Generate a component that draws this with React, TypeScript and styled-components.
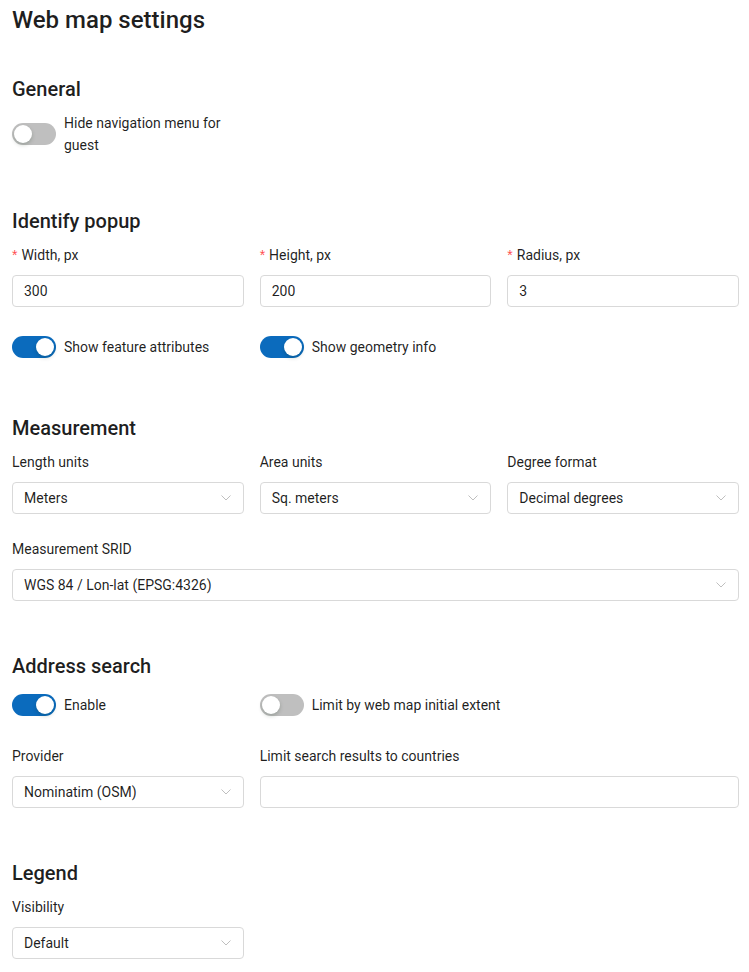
import React from "react";
import styled, { createGlobalStyle } from "styled-components";

const GlobalStyle = createGlobalStyle`
  html, body { margin: 0; padding: 0; background: #ffffff; }
  body {
    font-family: Roboto, "Noto Sans", "Liberation Sans", sans-serif;
    font-size: 14px;
    color: rgba(0, 0, 0, 0.88);
  }
  * { box-sizing: border-box; }
`;

const Page = styled.div`
  display: flex;
  flex-direction: column;
  padding: 4px 10px 16px 12px;
`;

const Title = styled.h1`
  margin: 0 0 12px 0;
  font-size: 24px;
  line-height: 32px;
  font-weight: 500;
  color: rgba(0, 0, 0, 0.88);
`;

const SectionTitle = styled.h2`
  margin: 27px 0 9px 0;
  font-size: 20px;
  line-height: 28px;
  font-weight: 500;
  color: rgba(0, 0, 0, 0.88);
`;

const Row = styled.div`
  display: grid;
  grid-template-columns: repeat(3, 1fr);
  column-gap: 16px;
  margin-bottom: 24px;
  &:last-child { margin-bottom: 0; }
`;

const Field = styled.div<{ $span?: number }>`
  display: flex;
  flex-direction: column;
  min-width: 0;
  grid-column: span ${(p) => p.$span ?? 1};
`;

const Label = styled.label`
  display: flex;
  align-items: center;
  height: 22px;
  line-height: 22px;
  margin-bottom: 9px;
  font-size: 14px;
  color: rgba(0, 0, 0, 0.88);
`;

const Required = styled.span`
  color: #ff4d4f;
  font-family: SimSun, "Liberation Sans", sans-serif;
  font-size: 14px;
  line-height: 1;
  margin-right: 4px;
`;

const Input = styled.div`
  height: 32px;
  border: 1px solid #d9d9d9;
  border-radius: 4px;
  padding: 0 11px;
  display: flex;
  align-items: center;
  font-size: 14px;
  line-height: 22px;
  color: rgba(0, 0, 0, 0.88);
  background: #fff;
`;

const SelectBox = styled(Input)`
  justify-content: space-between;
`;

const SwitchItem = styled.div<{ $span?: number }>`
  display: flex;
  align-items: center;
  min-height: 32px;
  gap: 8px;
  grid-column: span ${(p) => p.$span ?? 1};
`;

const SwitchTrack = styled.span<{ $on: boolean }>`
  position: relative;
  flex: none;
  width: 44px;
  height: 22px;
  border-radius: 11px;
  background: ${(p) => (p.$on ? "#0b6bbd" : "#bfbfbf")};
`;

const SwitchHandle = styled.span<{ $on: boolean }>`
  position: absolute;
  top: 2px;
  left: ${(p) => (p.$on ? "24px" : "2px")};
  width: 18px;
  height: 18px;
  border-radius: 50%;
  background: #fff;
  box-shadow: 0 2px 4px 0 rgba(0, 35, 11, 0.2);
`;

const SwitchLabel = styled.span`
  font-size: 14px;
  line-height: 22px;
  color: rgba(0, 0, 0, 0.88);
`;

const Chevron = () => (
  <svg width="10" height="6" viewBox="0 0 10 6" fill="none" style={{ flex: "none", marginRight: 1 }}>
    <path d="M0.5 0.5 L5 5 L9.5 0.5" stroke="#bfbfbf" strokeWidth="1" />
  </svg>
);

const Switch = ({ on, label, span }: { on: boolean; label: string; span?: number }) => (
  <SwitchItem $span={span}>
    <SwitchTrack $on={on}>
      <SwitchHandle $on={on} />
    </SwitchTrack>
    <SwitchLabel>{label}</SwitchLabel>
  </SwitchItem>
);

const TextField = ({ label, value, required, span }: { label: string; value: string; required?: boolean; span?: number }) => (
  <Field $span={span}>
    <Label>
      {required && <Required>*</Required>}
      {label}
    </Label>
    <Input>{value}</Input>
  </Field>
);

const SelectField = ({ label, value, span }: { label: string; value: string; span?: number }) => (
  <Field $span={span}>
    <Label>{label}</Label>
    <SelectBox>
      <span>{value}</span>
      <Chevron />
    </SelectBox>
  </Field>
);

export default function App() {
  return (
    <>
      <GlobalStyle />
      <Page>
        <Title>Web map settings</Title>

        <SectionTitle>General</SectionTitle>
        <Row>
          <Switch on={false} label="Hide navigation menu for guest" />
        </Row>

        <SectionTitle>Identify popup</SectionTitle>
        <Row>
          <TextField label="Width, px" value="300" required />
          <TextField label="Height, px" value="200" required />
          <TextField label="Radius, px" value="3" required />
        </Row>
        <Row>
          <Switch on label="Show feature attributes" />
          <Switch on label="Show geometry info" />
        </Row>

        <SectionTitle>Measurement</SectionTitle>
        <Row>
          <SelectField label="Length units" value="Meters" />
          <SelectField label="Area units" value="Sq. meters" />
          <SelectField label="Degree format" value="Decimal degrees" />
        </Row>
        <Row>
          <SelectField label="Measurement SRID" value="WGS 84 / Lon-lat (EPSG:4326)" span={3} />
        </Row>

        <SectionTitle>Address search</SectionTitle>
        <Row>
          <Switch on label="Enable" />
          <Switch on={false} label="Limit by web map initial extent" span={2} />
        </Row>
        <Row>
          <SelectField label="Provider" value="Nominatim (OSM)" />
          <TextField label="Limit search results to countries" value="" span={2} />
        </Row>

        <SectionTitle>Legend</SectionTitle>
        <Row>
          <SelectField label="Visibility" value="Default" />
        </Row>
      </Page>
    </>
  );
}
